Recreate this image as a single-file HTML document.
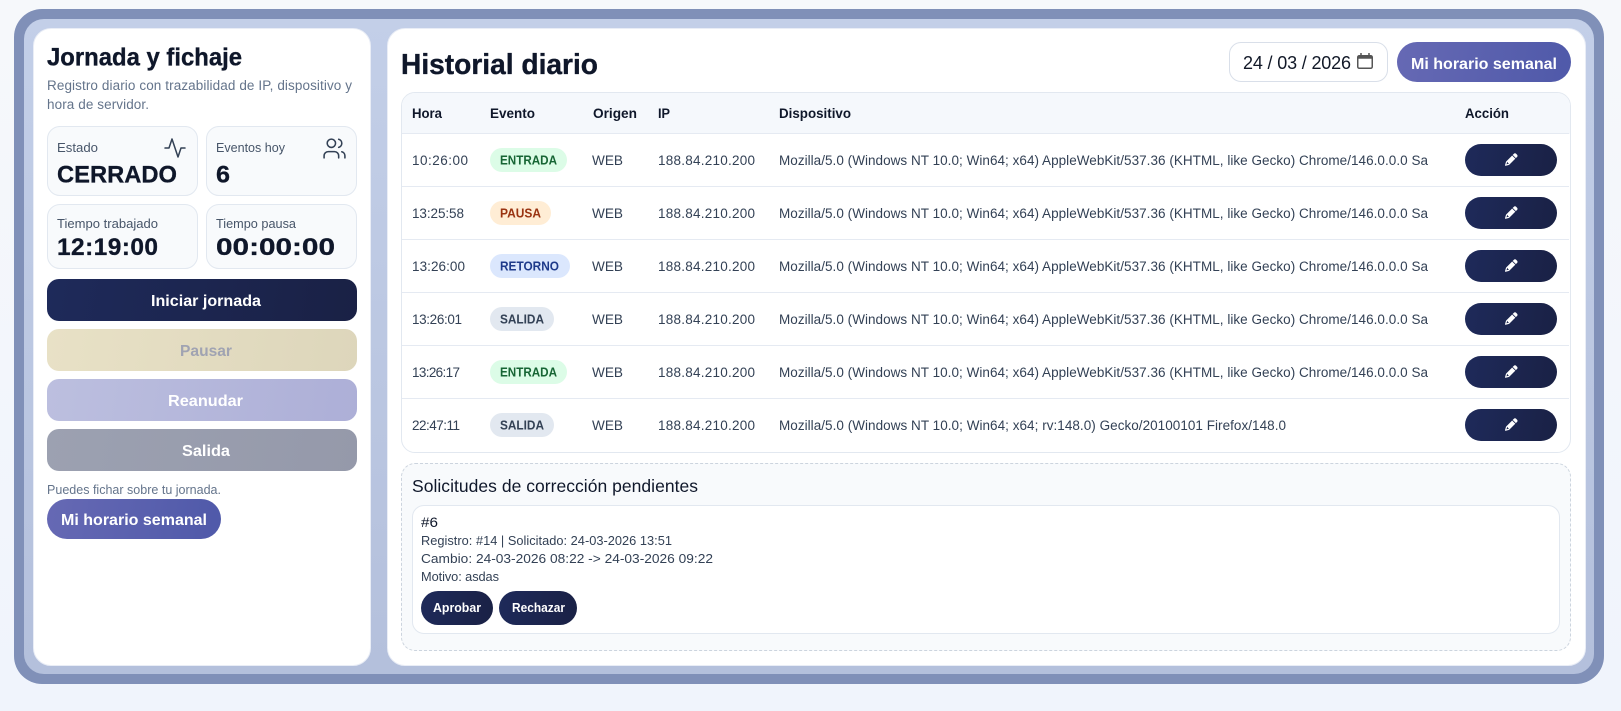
<!DOCTYPE html>
<html lang="es"><head><meta charset="utf-8"><title>Jornada y fichaje</title>
<style>
*{box-sizing:border-box}
html,body{margin:0;padding:0}
body{width:1621px;height:711px;overflow:hidden;position:relative;background:linear-gradient(180deg,#f6f8fb 0%,#f0f4fc 100%);font-family:"Liberation Sans",sans-serif}
.a{position:absolute}
.frame{left:14px;top:9px;width:1590px;height:675px;border-radius:28px;background:#8090b8}
.band{left:24px;top:19px;width:1570px;height:655px;border-radius:20px;background:linear-gradient(180deg,#c3cfe8,#b4c0dc)}
.card{background:#fff;border:1px solid #e9edf6;border-radius:18px}
.stat{background:#f8fafc;border:1px solid #e2e8f0;border-radius:13px}
.btn{left:47px;width:310px;height:42px;border-radius:12px}
.navy{background:linear-gradient(100deg,#1e2a5a,#1a2145)}
.indigo{background:linear-gradient(100deg,#6669b4,#4f59a9)}
.line{left:402px;width:1167px;height:1px;background:#e5eaf2}
.badge{left:490px;height:24px;border-radius:12px}
.edit{left:1465px;width:92px;height:32px;border-radius:16px}
svg.t{position:absolute;left:0;top:0}
</style></head><body>
<div class="a frame"></div><div class="a band"></div>
<div class="a card" style="left:33px;top:28px;width:338px;height:638px"></div>
<div class="a card" style="left:387px;top:28px;width:1199px;height:638px"></div>

<div class="a stat" style="left:47px;top:126px;width:151px;height:70px"></div>
<div class="a stat" style="left:206px;top:126px;width:151px;height:70px"></div>
<div class="a stat" style="left:47px;top:204px;width:151px;height:65px"></div>
<div class="a stat" style="left:206px;top:204px;width:151px;height:65px"></div>
<div class="a btn navy" style="top:279px"></div>
<div class="a btn" style="top:329px;background:linear-gradient(100deg,#e8e1c6,#ddd6bb)"></div>
<div class="a btn" style="top:379px;background:linear-gradient(100deg,#bcbfdf,#adafd7)"></div>
<div class="a btn" style="top:429px;background:linear-gradient(100deg,#9ca1b1,#9599aa)"></div>
<div class="a indigo" style="left:47px;top:499px;width:174px;height:40px;border-radius:20px"></div>

<div class="a" style="left:1229px;top:42px;width:159px;height:40px;background:#fff;border:1px solid #d9dfe9;border-radius:12px"></div>
<div class="a indigo" style="left:1397px;top:42px;width:174px;height:40px;border-radius:20px"></div>

<div class="a" style="left:401px;top:92px;width:1170px;height:361px;background:#fff;border:1px solid #e2e8f0;border-radius:14px;overflow:hidden"><div style="height:41px;background:#f5f8fc"></div></div>
<div class="a line" style="top:133px"></div><div class="a line" style="top:186px"></div><div class="a line" style="top:239px"></div><div class="a line" style="top:292px"></div><div class="a line" style="top:345px"></div><div class="a line" style="top:398px"></div>

<div class="a badge" style="top:148px;width:77px;background:#dcfce7"></div>
<div class="a badge" style="top:201px;width:61px;background:#ffedd5"></div>
<div class="a badge" style="top:254px;width:80px;background:#dbe7fd"></div>
<div class="a badge" style="top:307px;width:64px;background:#e2e8f0"></div>
<div class="a badge" style="top:360px;width:77px;background:#dcfce7"></div>
<div class="a badge" style="top:413px;width:64px;background:#e2e8f0"></div>
<div class="a edit navy" style="top:144px"></div><div class="a edit navy" style="top:197px"></div><div class="a edit navy" style="top:250px"></div><div class="a edit navy" style="top:303px"></div><div class="a edit navy" style="top:356px"></div><div class="a edit navy" style="top:409px"></div>

<div class="a" style="left:401px;top:463px;width:1170px;height:188px;background:#f8fafc;border:1px dashed #ccd4de;border-radius:14px"></div>
<div class="a" style="left:412px;top:505px;width:1148px;height:129px;background:#fff;border:1px solid #e2e8f0;border-radius:12px"></div>
<div class="a navy" style="left:421px;top:591px;width:72px;height:34px;border-radius:17px"></div>
<div class="a navy" style="left:499px;top:591px;width:78px;height:34px;border-radius:17px"></div>

<svg class="t" width="1621" height="711" viewBox="0 0 1621 711" xmlns="http://www.w3.org/2000/svg" font-family="Liberation Sans, sans-serif">
<defs><path id="p" fill="#fff" transform="scale(.0245)" d="M410.3 231l11.3-11.3-33.9-33.9-62.1-62.1L291.7 89.8l-11.3 11.3-22.6 22.6L58.6 322.9c-10.4 10.4-18 23.3-22.2 37.4L1 480.7c-2.5 8.4-.2 17.5 6.1 23.7s15.3 8.5 23.7 6.1l120.3-35.4c14.1-4.2 27-11.8 37.4-22.2L387.7 253.7 410.3 231zM160 399.4l-9.1 22.7c-4 3.1-8.5 5.4-13.3 6.9L59.4 452l23-78.1c1.4-4.9 3.8-9.4 6.9-13.3l22.7-9.1v32c0 8.8 7.2 16 16 16h32zM362.7 18.7L348.3 33.2 325.7 55.8 314.3 67.1l33.9 33.9 62.1 62.1 33.9 33.9 11.3-11.3 22.6-22.6 14.5-14.5c25-25 25-65.5 0-90.5L453.3 18.7c-25-25-65.5-25-90.5 0z"/></defs>
<text x="47" y="65.500" font-size="25" font-weight="700" fill="#0f172a" stroke="#0f172a" stroke-width=".35" textLength="195" lengthAdjust="spacingAndGlyphs">Jornada y fichaje</text>
<g font-size="13.5" fill="#64748b">
<text x="47" y="90" textLength="305" lengthAdjust="spacing">Registro diario con trazabilidad de IP, dispositivo y</text>
<text x="47" y="109" textLength="102" lengthAdjust="spacing">hora de servidor.</text>
</g>
<g font-size="13" fill="#475569">
<text x="57" y="152" textLength="41" lengthAdjust="spacingAndGlyphs">Estado</text>
<text x="216" y="152" textLength="69" lengthAdjust="spacingAndGlyphs">Eventos hoy</text>
<text x="57" y="228" textLength="101" lengthAdjust="spacingAndGlyphs">Tiempo trabajado</text>
<text x="216" y="228" textLength="80" lengthAdjust="spacingAndGlyphs">Tiempo pausa</text>
</g>
<g font-size="24.500" font-weight="700" fill="#0f172a" stroke="#0f172a" stroke-width=".3">
<text x="57" y="182.500" textLength="120" lengthAdjust="spacingAndGlyphs">CERRADO</text>
<text x="216" y="182.500" textLength="14" lengthAdjust="spacingAndGlyphs">6</text>
<text x="57" y="255" textLength="101" lengthAdjust="spacing">12:19:00</text>
<text x="216" y="255" textLength="119" lengthAdjust="spacingAndGlyphs">00:00:00</text>
</g>
<g font-size="16" font-weight="700" fill="#fff">
<text x="151" y="306" textLength="110" lengthAdjust="spacingAndGlyphs">Iniciar jornada</text>
<text x="180" y="356" textLength="52" lengthAdjust="spacingAndGlyphs" fill="#a0a3b2">Pausar</text>
<text x="168" y="406" textLength="75" lengthAdjust="spacingAndGlyphs">Reanudar</text>
<text x="182" y="456" textLength="48" lengthAdjust="spacingAndGlyphs">Salida</text>
<text x="61" y="525" textLength="146" lengthAdjust="spacingAndGlyphs">Mi horario semanal</text>
<text x="1411" y="69" textLength="146" lengthAdjust="spacingAndGlyphs">Mi horario semanal</text>
</g>
<text x="47" y="494" font-size="12.5" fill="#64748b" textLength="174" lengthAdjust="spacingAndGlyphs">Puedes fichar sobre tu jornada.</text>
<text x="401" y="74" font-size="29" font-weight="700" fill="#0f172a" stroke="#0f172a" stroke-width=".35" textLength="197" lengthAdjust="spacingAndGlyphs">Historial diario</text>
<text x="1243" y="69" font-size="18" fill="#111827" textLength="108" lengthAdjust="spacing">24 / 03 / 2026</text>

<g font-size="13.5" font-weight="700" fill="#0f172a">
<text x="412" y="118" textLength="30" lengthAdjust="spacingAndGlyphs">Hora</text>
<text x="490" y="118" textLength="45" lengthAdjust="spacingAndGlyphs">Evento</text>
<text x="593" y="118" textLength="44" lengthAdjust="spacingAndGlyphs">Origen</text>
<text x="658" y="118" textLength="12" lengthAdjust="spacingAndGlyphs">IP</text>
<text x="779" y="118" textLength="72" lengthAdjust="spacingAndGlyphs">Dispositivo</text>
<text x="1465" y="118" textLength="44" lengthAdjust="spacingAndGlyphs">Acción</text>
</g>
<g font-size="13.5" fill="#334155">
<text x="412" y="165" textLength="56" lengthAdjust="spacing">10:26:00</text>
<text x="412" y="218" textLength="52" lengthAdjust="spacing">13:25:58</text>
<text x="412" y="271" textLength="53" lengthAdjust="spacing">13:26:00</text>
<text x="412" y="324" textLength="50" lengthAdjust="spacing">13:26:01</text>
<text x="412" y="377" textLength="48" lengthAdjust="spacing">13:26:17</text>
<text x="412" y="430" textLength="48" lengthAdjust="spacing">22:47:11</text>
<text x="592" y="165" textLength="31" lengthAdjust="spacingAndGlyphs">WEB</text>
<text x="592" y="218" textLength="31" lengthAdjust="spacingAndGlyphs">WEB</text>
<text x="592" y="271" textLength="31" lengthAdjust="spacingAndGlyphs">WEB</text>
<text x="592" y="324" textLength="31" lengthAdjust="spacingAndGlyphs">WEB</text>
<text x="592" y="377" textLength="31" lengthAdjust="spacingAndGlyphs">WEB</text>
<text x="592" y="430" textLength="31" lengthAdjust="spacingAndGlyphs">WEB</text>
<text x="658" y="165" textLength="97" lengthAdjust="spacing">188.84.210.200</text>
<text x="658" y="218" textLength="97" lengthAdjust="spacing">188.84.210.200</text>
<text x="658" y="271" textLength="97" lengthAdjust="spacing">188.84.210.200</text>
<text x="658" y="324" textLength="97" lengthAdjust="spacing">188.84.210.200</text>
<text x="658" y="377" textLength="97" lengthAdjust="spacing">188.84.210.200</text>
<text x="658" y="430" textLength="97" lengthAdjust="spacing">188.84.210.200</text>
<text x="779" y="165" textLength="649" lengthAdjust="spacing">Mozilla/5.0 (Windows NT 10.0; Win64; x64) AppleWebKit/537.36 (KHTML, like Gecko) Chrome/146.0.0.0 Sa</text>
<text x="779" y="218" textLength="649" lengthAdjust="spacing">Mozilla/5.0 (Windows NT 10.0; Win64; x64) AppleWebKit/537.36 (KHTML, like Gecko) Chrome/146.0.0.0 Sa</text>
<text x="779" y="271" textLength="649" lengthAdjust="spacing">Mozilla/5.0 (Windows NT 10.0; Win64; x64) AppleWebKit/537.36 (KHTML, like Gecko) Chrome/146.0.0.0 Sa</text>
<text x="779" y="324" textLength="649" lengthAdjust="spacing">Mozilla/5.0 (Windows NT 10.0; Win64; x64) AppleWebKit/537.36 (KHTML, like Gecko) Chrome/146.0.0.0 Sa</text>
<text x="779" y="377" textLength="649" lengthAdjust="spacing">Mozilla/5.0 (Windows NT 10.0; Win64; x64) AppleWebKit/537.36 (KHTML, like Gecko) Chrome/146.0.0.0 Sa</text>
<text x="779" y="430" textLength="507" lengthAdjust="spacing">Mozilla/5.0 (Windows NT 10.0; Win64; x64; rv:148.0) Gecko/20100101 Firefox/148.0</text>
</g>
<g font-size="12.5" font-weight="700">
<text x="500" y="164.500" fill="#166534" textLength="57" lengthAdjust="spacingAndGlyphs">ENTRADA</text>
<text x="500" y="217.500" fill="#9a3412" textLength="41" lengthAdjust="spacingAndGlyphs">PAUSA</text>
<text x="500" y="270.500" fill="#1e3a8a" textLength="59" lengthAdjust="spacingAndGlyphs">RETORNO</text>
<text x="500" y="323.500" fill="#334155" textLength="44" lengthAdjust="spacingAndGlyphs">SALIDA</text>
<text x="500" y="376.500" fill="#166534" textLength="57" lengthAdjust="spacingAndGlyphs">ENTRADA</text>
<text x="500" y="429.500" fill="#334155" textLength="44" lengthAdjust="spacingAndGlyphs">SALIDA</text>
</g>
<text x="412" y="492" font-size="17.500" fill="#0f172a" textLength="286" lengthAdjust="spacing">Solicitudes de corrección pendientes</text>
<text x="421" y="527" font-size="13.5" fill="#0f172a" textLength="17" lengthAdjust="spacingAndGlyphs">#6</text>
<g font-size="12.8" fill="#334155">
<text x="421" y="545" textLength="251" lengthAdjust="spacing">Registro: #14 | Solicitado: 24-03-2026 13:51</text>
<text x="421" y="563" textLength="292" lengthAdjust="spacingAndGlyphs">Cambio: 24-03-2026 08:22 -&gt; 24-03-2026 09:22</text>
<text x="421" y="581" textLength="78" lengthAdjust="spacing">Motivo: asdas</text>
</g>
<g font-size="12.5" font-weight="700" fill="#fff">
<text x="433" y="612" textLength="48" lengthAdjust="spacingAndGlyphs">Aprobar</text>
<text x="512" y="612" textLength="53" lengthAdjust="spacingAndGlyphs">Rechazar</text>
</g>

<svg x="163" y="136" width="24" height="24" viewBox="0 0 24 24" fill="none" stroke="#334155" stroke-width="1.5" stroke-linecap="round" stroke-linejoin="round"><path d="M22 12h-4l-3 9L9 3l-3 9H2"/></svg>
<svg x="322" y="136" width="25" height="25" viewBox="0 0 24 24" fill="none" stroke="#334155" stroke-width="1.5" stroke-linecap="round" stroke-linejoin="round"><path d="M16 21v-2a4 4 0 0 0-4-4H6a4 4 0 0 0-4 4v2"/><circle cx="9" cy="7" r="4"/><path d="M22 21v-2a4 4 0 0 0-3-3.87"/><path d="M16 3.13a4 4 0 0 1 0 7.75"/></svg>
<svg x="1356" y="52" width="18" height="18" viewBox="0 0 18 18" fill="none" stroke="#555" stroke-width="1.5"><rect x="1.750" y="3.750" width="14.500" height="12.500" rx="1.500"/><path d="M2 5.250h14" stroke-width="3"/><path d="M5 1v3M13 1v3"/></svg>
<use href="#p" x="1505" y="153.300"/><use href="#p" x="1505" y="206.300"/><use href="#p" x="1505" y="259.300"/><use href="#p" x="1505" y="312.300"/><use href="#p" x="1505" y="365.300"/><use href="#p" x="1505" y="418.300"/>
</svg>
</body></html>
